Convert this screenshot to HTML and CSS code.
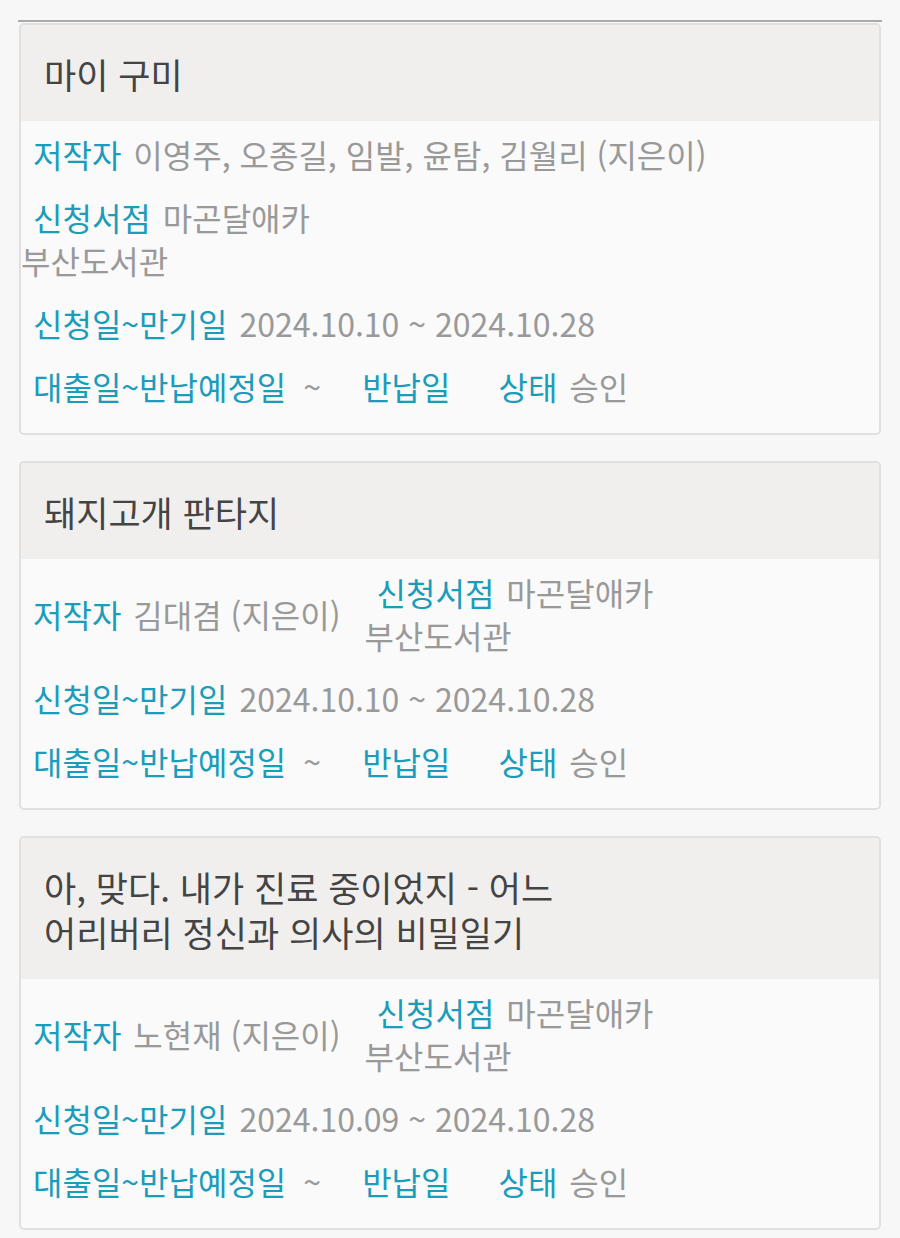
FILE: index.html
```html
<!DOCTYPE html>
<html lang="ko">
<head>
<meta charset="utf-8">
<title>신청 내역</title>
<link rel="stylesheet" href="styles.css">
</head>
<body>
<div class="page">
  <div class="topline"></div>

  <div class="card">
    <div class="card-head"><h2 class="title">마이 구미</h2></div>
    <div class="card-body">
      <div class="row">
        <span class="item"><span class="lbl">저작자</span><span class="val">이영주, 오종길, 임발, 윤탐, 김월리 (지은이)</span></span>
        <span class="item"><span class="lbl">신청서점</span><span class="val">마곤달애카<br>부산도서관</span></span>
      </div>
      <div class="row">
        <span class="item"><span class="lbl">신청일~만기일</span><span class="val">2024.10.10 ~ 2024.10.28</span></span>
      </div>
      <div class="row">
        <span class="item"><span class="lbl">대출일~반납예정일</span><span class="val tilde">~</span></span>
        <span class="item"><span class="lbl">반납일</span></span>
        <span class="item"><span class="lbl">상태</span><span class="val">승인</span></span>
      </div>
    </div>
  </div>

  <div class="card">
    <div class="card-head"><h2 class="title">돼지고개 판타지</h2></div>
    <div class="card-body">
      <div class="row">
        <span class="item"><span class="lbl">저작자</span><span class="val">김대겸 (지은이)</span></span>
        <span class="item"><span class="lbl">신청서점</span><span class="val">마곤달애카<br>부산도서관</span></span>
      </div>
      <div class="row">
        <span class="item"><span class="lbl">신청일~만기일</span><span class="val">2024.10.10 ~ 2024.10.28</span></span>
      </div>
      <div class="row">
        <span class="item"><span class="lbl">대출일~반납예정일</span><span class="val tilde">~</span></span>
        <span class="item"><span class="lbl">반납일</span></span>
        <span class="item"><span class="lbl">상태</span><span class="val">승인</span></span>
      </div>
    </div>
  </div>

  <div class="card">
    <div class="card-head"><h2 class="title">아, 맞다. 내가 진료 중이었지 - 어느<br>어리버리 정신과 의사의 비밀일기</h2></div>
    <div class="card-body">
      <div class="row">
        <span class="item"><span class="lbl">저작자</span><span class="val">노현재 (지은이)</span></span>
        <span class="item"><span class="lbl">신청서점</span><span class="val">마곤달애카<br>부산도서관</span></span>
      </div>
      <div class="row">
        <span class="item"><span class="lbl">신청일~만기일</span><span class="val">2024.10.09 ~ 2024.10.28</span></span>
      </div>
      <div class="row">
        <span class="item"><span class="lbl">대출일~반납예정일</span><span class="val tilde">~</span></span>
        <span class="item"><span class="lbl">반납일</span></span>
        <span class="item"><span class="lbl">상태</span><span class="val">승인</span></span>
      </div>
    </div>
  </div>
</div>
</body>
</html>
```

FILE: styles.css
```css
* { box-sizing: border-box; }
html, body {
  margin: 0;
  padding: 0;
  background: #f7f7f7;
}
body {
  font-family: "Noto Sans CJK KR", "Noto Sans", sans-serif;
  color: #999;
}
.page {
  padding: 20px 18px 0 18px;
}
.topline {
  height: 2px;
  background: #a9a9a9;
  margin: 0 0 1px 0;
}
.card {
  margin: 0 1px 26px 1px;
  border: 2px solid #e0e0e0;
  border-radius: 5px;
  background: #fafafa;
  overflow: hidden;
}
.card-head {
  background: #f0efee;
  padding: 26px 24px 25px 23px;
}
.title {
  margin: 0;
  font-size: 35px;
  line-height: 45px;
  font-weight: 400;
  color: #444;
}
.card-body {
  padding: 12px 0 25px 0;
  font-size: 32px;
  line-height: 43px;
}
.row {
  display: flex;
  flex-wrap: wrap;
  align-items: center;
  row-gap: 20px;
  margin-bottom: 20px;
}
.row:last-child {
  margin-bottom: 0;
}
.item {
  display: block;
  margin-right: 24px;
}
.lbl {
  color: #1a9cbb;
  margin-left: 12px;
  margin-right: 12px;
}
.val {
  color: #999;
}
.tilde {
  margin-left: 5px;
  padding-right: 5px;
}
```
